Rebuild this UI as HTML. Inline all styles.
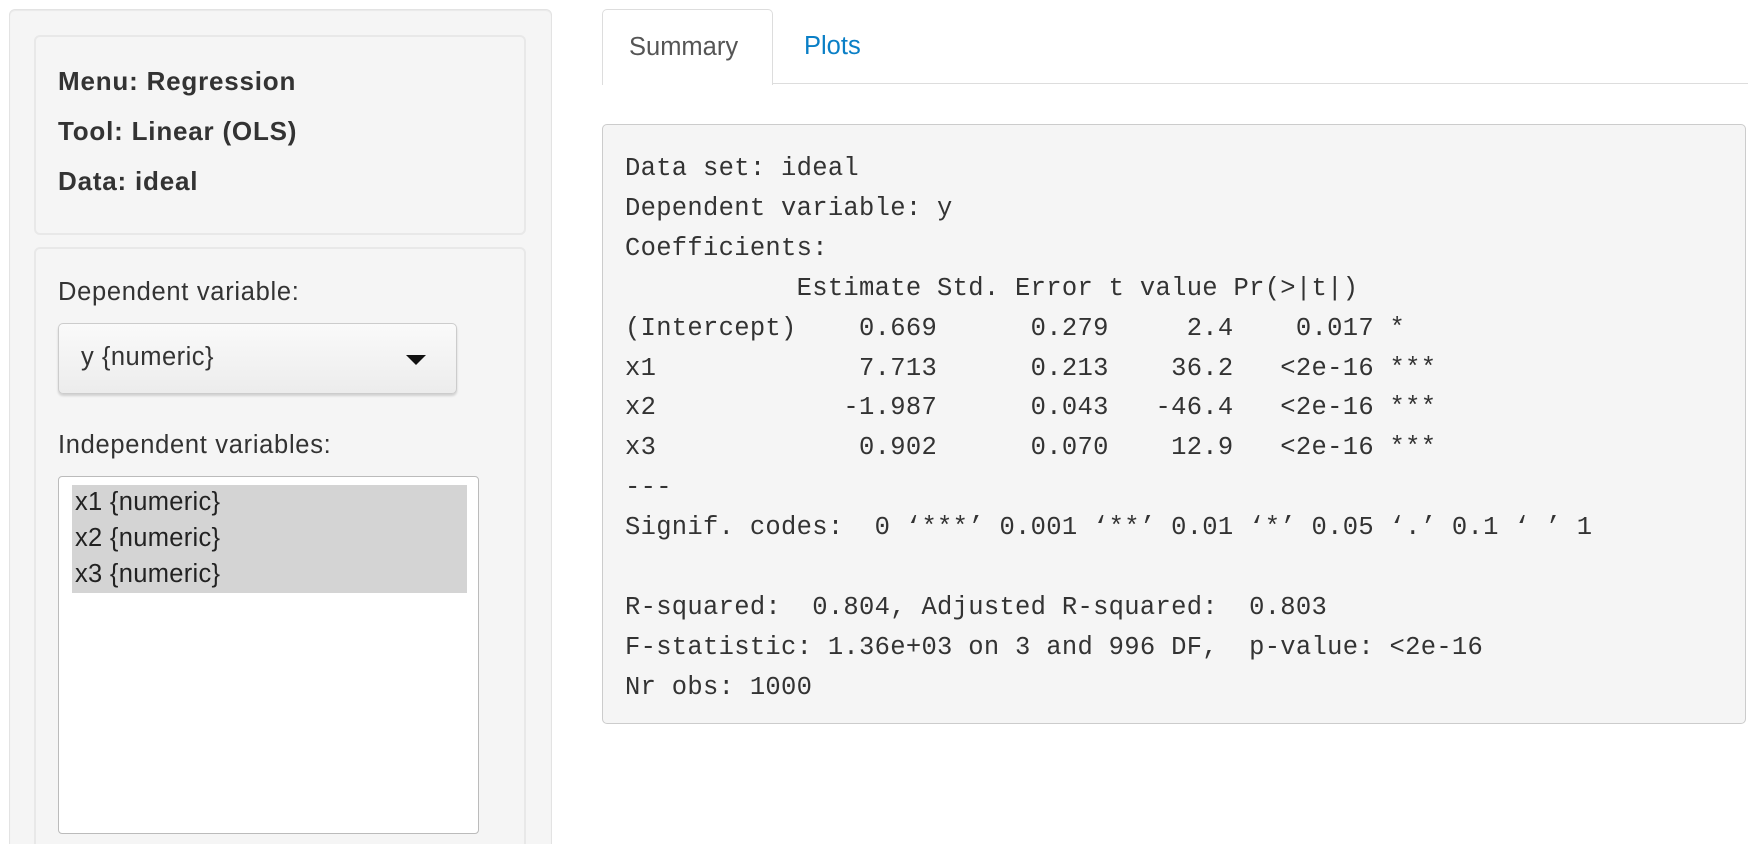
<!DOCTYPE html>
<html style="overflow:hidden;height:844px"><head><meta charset="utf-8"><style>
*{box-sizing:border-box;margin:0;padding:0}
body{width:1752px;height:844px;background:#fff;position:relative;overflow:hidden;font-family:"Liberation Sans",Arial,sans-serif;color:#333}
.well{position:absolute;left:9px;top:9px;width:543px;height:850px;background:#f5f5f5;border:1px solid #e3e3e3;border-radius:6px;box-shadow:inset 0 1px 1px rgba(0,0,0,.05)}
.box{position:absolute;background:#f5f5f5;border:2px solid #e8e8e8;border-radius:6px}
.b{font-weight:bold;font-size:26px;letter-spacing:0.8px;position:absolute;left:58px}
.lbl{font-size:25.5px;letter-spacing:0.7px;position:absolute;left:58px}
.sel{position:absolute;left:58px;top:323px;width:399px;height:71px;border:1px solid #ccc;border-radius:5px;background:linear-gradient(#fafafa,#ececec);box-shadow:0 2px 2px rgba(0,0,0,.15);font-size:25.5px;letter-spacing:0.5px;padding:19px 0 0 22px}
.arrow{position:absolute;right:30px;top:31px;width:0;height:0;border-left:10px solid transparent;border-right:10px solid transparent;border-top:10px solid #111}
.list{position:absolute;left:58px;top:476px;width:421px;height:358px;border:1px solid #bbb;border-radius:4px;background:#fff}
.opt{position:absolute;left:13px;width:395px;height:36px;background:#d4d4d4;font-size:25.5px;letter-spacing:0.3px;padding:3px 0 0 3px;color:#222}
.tab{position:absolute;left:602px;top:9px;width:171px;height:76px;border:1px solid #ddd;border-bottom:none;border-radius:5px 5px 0 0;background:#fff;font-size:25.5px;color:#555;padding:23px 0 0 26px}
.tline{position:absolute;left:602px;top:83px;width:1146px;height:1px;background:#ddd}
.plots{position:absolute;left:804px;top:32px;font-size:25.5px;color:#0a7fc6}
pre{position:absolute;left:602px;top:124px;width:1144px;height:600px;background:#f5f5f5;border:1.5px solid #ccc;border-radius:5px;padding:24px 0 0 22px;font-family:"Liberation Mono",monospace;font-size:25.5px;line-height:39.9px;color:#333;letter-spacing:0.3px}
</style></head><body>
<div class="well"></div>
<div class="box" style="left:34px;top:35px;width:492px;height:200px"></div>
<div class="box" style="left:34px;top:247px;width:492px;height:610px"></div>
<div class="b" style="top:66px">Menu: Regression</div>
<div class="b" style="top:116px">Tool: Linear (OLS)</div>
<div class="b" style="top:166px">Data: ideal</div>
<div class="lbl" style="top:278px">Dependent variable:</div>
<div class="sel">y {numeric}<div class="arrow"></div></div>
<div class="lbl" style="top:431px">Independent variables:</div>
<div class="list">
<div class="opt" style="top:8px">x1 {numeric}</div>
<div class="opt" style="top:44px">x2 {numeric}</div>
<div class="opt" style="top:80px">x3 {numeric}</div>
</div>
<div class="tline"></div>
<div class="tab">Summary</div>
<div class="plots">Plots</div>
<pre>Data set: ideal
Dependent variable: y
Coefficients:
           Estimate Std. Error t value Pr(&gt;|t|)
(Intercept)    0.669      0.279     2.4    0.017 *
x1             7.713      0.213    36.2   &lt;2e-16 ***
x2            -1.987      0.043   -46.4   &lt;2e-16 ***
x3             0.902      0.070    12.9   &lt;2e-16 ***
---
Signif. codes:  0 ‘***’ 0.001 ‘**’ 0.01 ‘*’ 0.05 ‘.’ 0.1 ‘ ’ 1

R-squared:  0.804, Adjusted R-squared:  0.803
F-statistic: 1.36e+03 on 3 and 996 DF,  p-value: &lt;2e-16
Nr obs: 1000</pre>
</body></html>
